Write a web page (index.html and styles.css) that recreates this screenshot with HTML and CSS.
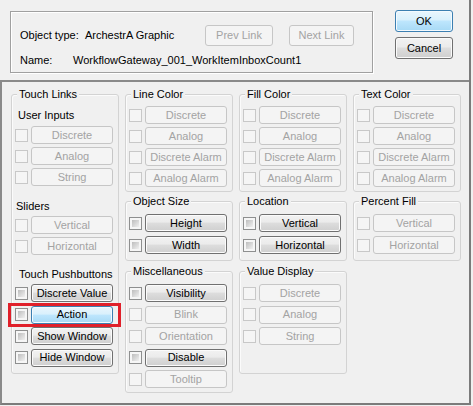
FILE: index.html
```html
<!DOCTYPE html>
<html>
<head>
<meta charset="utf-8">
<title>Animation Links</title>
<link rel="stylesheet" href="styles.css">
</head>
<body>
<div class="dlg">
  <div class="top">
    <div class="info">
      <div class="info-row r1">
        <span class="lbl-type">Object type:</span><span>ArchestrA Graphic</span>
        <div class="nav">
          <button class="btn dis nav-prev">Prev Link</button>
          <button class="btn dis nav-next">Next Link</button>
        </div>
      </div>
      <div class="info-row r2">
        <span class="lbl-name">Name:</span><span>WorkflowGateway_001_WorkItemInboxCount1</span>
      </div>
    </div>
    <div class="actions">
      <button class="btn blue">OK</button>
      <button class="btn on">Cancel</button>
    </div>
  </div>

  <div class="panel">
    <div class="col">
      <fieldset class="grp g-touch">
        <legend>Touch Links</legend>
        <div class="sub sub-ui">User Inputs</div>
        <div class="rows">
          <div class="row"><span class="cb cb-dis"></span><button class="btn dis">Discrete</button></div>
          <div class="row"><span class="cb cb-dis"></span><button class="btn dis">Analog</button></div>
          <div class="row"><span class="cb cb-dis"></span><button class="btn dis">String</button></div>
        </div>
        <div class="sub sub-sl">Sliders</div>
        <div class="rows">
          <div class="row"><span class="cb cb-dis"></span><button class="btn dis">Vertical</button></div>
          <div class="row"><span class="cb cb-dis"></span><button class="btn dis">Horizontal</button></div>
        </div>
        <div class="sub sub-pb">Touch Pushbuttons</div>
        <div class="rows wide">
          <div class="row"><span class="cb cb-on"></span><button class="btn on">Discrete Value</button></div>
          <div class="row"><span class="cb cb-on"></span><button class="btn blue">Action</button><span class="mark"></span></div>
          <div class="row"><span class="cb cb-on"></span><button class="btn on">Show Window</button></div>
          <div class="row"><span class="cb cb-on"></span><button class="btn on">Hide Window</button></div>
        </div>
      </fieldset>
    </div>

    <div class="col">
      <fieldset class="grp g-color">
        <legend>Line Color</legend>
        <div class="rows">
          <div class="row"><span class="cb cb-dis"></span><button class="btn dis">Discrete</button></div>
          <div class="row"><span class="cb cb-dis"></span><button class="btn dis">Analog</button></div>
          <div class="row"><span class="cb cb-dis"></span><button class="btn dis">Discrete Alarm</button></div>
          <div class="row"><span class="cb cb-dis"></span><button class="btn dis">Analog Alarm</button></div>
        </div>
      </fieldset>
      <fieldset class="grp g-size">
        <legend>Object Size</legend>
        <div class="rows mid">
          <div class="row"><span class="cb cb-on"></span><button class="btn on">Height</button></div>
          <div class="row"><span class="cb cb-on"></span><button class="btn on">Width</button></div>
        </div>
      </fieldset>
      <fieldset class="grp g-misc">
        <legend>Miscellaneous</legend>
        <div class="rows wide">
          <div class="row"><span class="cb cb-on"></span><button class="btn on">Visibility</button></div>
          <div class="row"><span class="cb cb-dis"></span><button class="btn dis">Blink</button></div>
          <div class="row"><span class="cb cb-dis"></span><button class="btn dis">Orientation</button></div>
          <div class="row"><span class="cb cb-on"></span><button class="btn on">Disable</button></div>
          <div class="row"><span class="cb cb-dis"></span><button class="btn dis">Tooltip</button></div>
        </div>
      </fieldset>
    </div>

    <div class="col">
      <fieldset class="grp g-color">
        <legend>Fill Color</legend>
        <div class="rows">
          <div class="row"><span class="cb cb-dis"></span><button class="btn dis">Discrete</button></div>
          <div class="row"><span class="cb cb-dis"></span><button class="btn dis">Analog</button></div>
          <div class="row"><span class="cb cb-dis"></span><button class="btn dis">Discrete Alarm</button></div>
          <div class="row"><span class="cb cb-dis"></span><button class="btn dis">Analog Alarm</button></div>
        </div>
      </fieldset>
      <fieldset class="grp g-size">
        <legend>Location</legend>
        <div class="rows mid">
          <div class="row"><span class="cb cb-on"></span><button class="btn on">Vertical</button></div>
          <div class="row"><span class="cb cb-on"></span><button class="btn on">Horizontal</button></div>
        </div>
      </fieldset>
      <fieldset class="grp g-vd">
        <legend>Value Display</legend>
        <div class="rows wide">
          <div class="row"><span class="cb cb-dis"></span><button class="btn dis">Discrete</button></div>
          <div class="row"><span class="cb cb-dis"></span><button class="btn dis">Analog</button></div>
          <div class="row"><span class="cb cb-dis"></span><button class="btn dis">String</button></div>
        </div>
      </fieldset>
    </div>

    <div class="col">
      <fieldset class="grp g-color">
        <legend>Text Color</legend>
        <div class="rows">
          <div class="row"><span class="cb cb-dis"></span><button class="btn dis">Discrete</button></div>
          <div class="row"><span class="cb cb-dis"></span><button class="btn dis">Analog</button></div>
          <div class="row"><span class="cb cb-dis"></span><button class="btn dis">Discrete Alarm</button></div>
          <div class="row"><span class="cb cb-dis"></span><button class="btn dis">Analog Alarm</button></div>
        </div>
      </fieldset>
      <fieldset class="grp g-size">
        <legend>Percent Fill</legend>
        <div class="rows mid">
          <div class="row"><span class="cb cb-dis"></span><button class="btn dis">Vertical</button></div>
          <div class="row"><span class="cb cb-dis"></span><button class="btn dis">Horizontal</button></div>
        </div>
      </fieldset>
    </div>
  </div>
</div>
</body>
</html>
```

FILE: styles.css
```css
* { box-sizing: border-box; }
html, body { margin: 0; padding: 0; }
body {
  background: #f0f0f0;
  font: 11px/13px "Liberation Sans", Arial, sans-serif;
  color: #000;
  width: 473px;
  height: 406px;
  overflow: hidden;
}
.dlg {
  width: 471px;
  height: 405px;
  border-right: 2px solid #7b7b7b;
  display: flex;
  flex-direction: column;
}
.top {
  height: 80px;
  flex: none;
  display: flex;
  align-items: flex-start;
  padding-left: 10px;
}
.info {
  margin-top: 11px;
  width: 363px;
  height: 62px;
  border: 1px solid #a0a0a0;
  box-shadow: inset 1px 1px 0 #fff, 1px 1px 0 #fff;
  padding: 13px 18px 0 9px;
  display: flex;
  flex-direction: column;
}
.info-row { display: flex; align-items: center; white-space: nowrap; }
.r1 { height: 21px; }
.r2 { height: 13px; margin-top: 8px; }
.lbl-type { width: 65px; flex: none; }
.lbl-name { width: 53px; flex: none; }
.nav { margin-left: auto; display: flex; gap: 16px; }
.nav .btn { height: 21px; }
.nav-prev { width: 68px; }
.nav-next { width: 65px; }
.actions {
  margin-left: 22px;
  margin-top: 10px;
  display: flex;
  flex-direction: column;
  gap: 5px;
}
.actions .btn { width: 58px; height: 22px; }

.btn {
  font: inherit;
  line-height: 13px;
  margin: 0;
  padding: 0;
  border-radius: 3px;
  display: flex;
  align-items: center;
  justify-content: center;
  white-space: nowrap;
}
.dis { border: 1px solid #c6c6c6; background: #f4f4f4; color: #a3a3a3; }
.on {
  border: 1px solid #707070;
  background: linear-gradient(#f2f2f2, #ebebeb 45%, #dddddd 50%, #cfcfcf);
  box-shadow: inset 0 0 0 1px #fbfbfb;
  color: #000;
}
.blue {
  border: 1px solid #3c7fb1;
  background: linear-gradient(#eaf6fd, #d9f0fc 45%, #bee6fd 50%, #a7d9f5);
  box-shadow: inset 0 0 0 1px #f4fafe;
  color: #000;
}

.panel {
  flex: 1;
  border-top: 2px solid #8a8a8a;
  border-left: 2px solid #8a8a8a;
  border-bottom: 2px solid #7b7b7b;
  padding: 6px 0 0 9px;
  display: grid;
  grid-template-columns: repeat(4, 108px);
  column-gap: 6px;
  align-items: start;
}
.col { display: flex; flex-direction: column; }

.grp {
  margin: 0;
  min-width: 0;
  border: 1px solid #d3d3d3;
  border-radius: 3px;
  box-shadow: inset 1px 1px 0 #fbfbfb;
  padding: 5px 0 0 0;
}
.grp legend {
  padding: 0 2px;
  margin-left: 5px;
  line-height: 13px;
  background: #f0f0f0;
}
.g-color { height: 104px; }
.g-size { height: 66px; margin-top: 3px; padding-top: 6px; }
.g-misc { height: 128px; margin-top: 4px; padding-top: 6px; }
.g-vd { height: 109px; margin-top: 4px; padding-top: 6px; }
.g-touch { height: 286px; padding-top: 0; }

.sub { margin-left: 6px; height: 13px; }
.sub-ui { margin-top: 8px; margin-bottom: 4px; }
.sub-sl { margin-top: 14px; margin-bottom: 3px; margin-left: 4px; }
.sub-pb { margin-top: 13px; margin-bottom: 3px; margin-left: 7px; }

.rows { display: flex; flex-direction: column; gap: 3px; margin-left: 3px; }
.rows.mid { gap: 4px; }
.rows.wide { gap: 3.5px; }
.row { display: flex; align-items: center; gap: 3px; height: 18px; position: relative; }
.row .btn { width: 82px; height: 18px; flex: none; }

.cb { width: 13px; height: 13px; flex: none; }
.cb-dis { border: 1px solid #c8c8c8; background: #f5f5f5; }
.cb-on {
  border: 1px solid #8e8f8f;
  padding: 2px;
  background: linear-gradient(135deg, #bdbdbd, #f0f0f0) content-box, #f6f6f6;
}

.mark {
  position: absolute;
  left: -7px;
  top: -3px;
  width: 113px;
  height: 24px;
  border: 3px solid #e0202a;
}
```
